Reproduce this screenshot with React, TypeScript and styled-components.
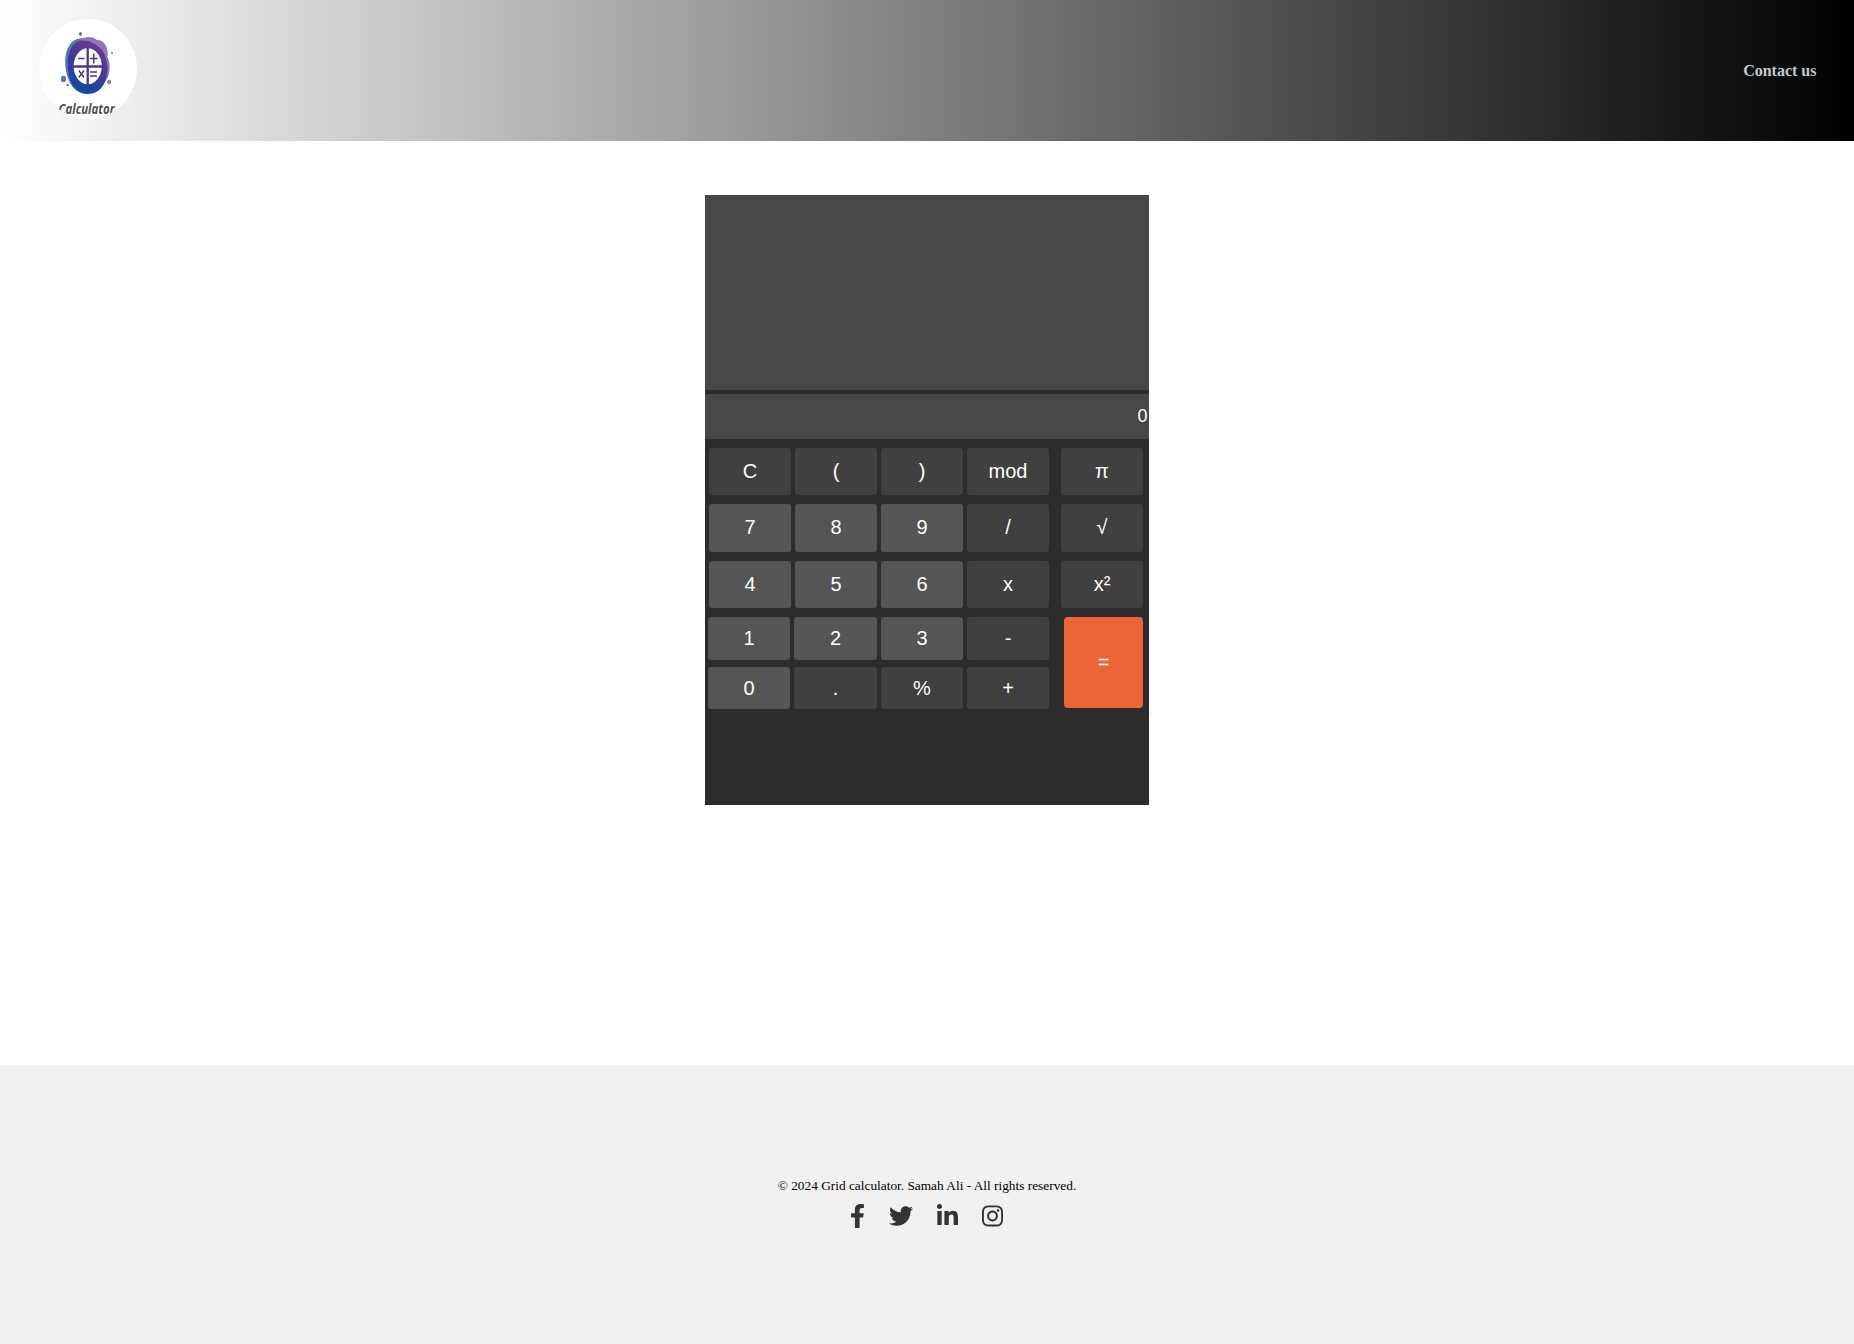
import React from "react";
import styled, { createGlobalStyle } from "styled-components";
import { FaFacebookF, FaTwitter, FaLinkedinIn, FaInstagram } from "react-icons/fa";

const GlobalStyle = createGlobalStyle`
  * { box-sizing: border-box; }
  body { margin: 0; background: #fff; font-family: "Liberation Serif", serif; }
`;

const Page = styled.div`
  display: flex;
  flex-direction: column;
  min-height: 1344px;
`;

const Header = styled.header`
  display: flex;
  align-items: center;
  justify-content: space-between;
  height: 141px;
  padding: 0 37.5px 0 38px;
  background: linear-gradient(to right, #fff, #000);
`;

const LogoSvg = styled.svg`
  display: block;
  width: 100px;
  height: 100px;
  margin-bottom: 3px;
`;

const ContactLink = styled.a`
  color: #c0c9ce;
  font-size: 16px;
  font-weight: bold;
  line-height: 18px;
  text-decoration: none;
`;

const Main = styled.main`
  display: flex;
  justify-content: center;
  align-items: flex-start;
  flex: 1;
  padding-top: 54px;
`;

const Calculator = styled.section`
  display: flex;
  flex-direction: column;
  width: 444px;
  height: 610px;
  background: #2c2c2c;
  overflow: hidden;
  font-family: "Liberation Sans", Arial, sans-serif;
`;

const History = styled.div`
  height: 195px;
  background: #474747;
`;

const Entry = styled.output`
  display: flex;
  align-items: center;
  justify-content: flex-end;
  height: 45px;
  margin: 4px -2px 0;
  padding: 0 3.5px 0 4px;
  border-radius: 5px;
  background: #474747;
  color: #fff;
  font-size: 18px;
`;

const Keypad = styled.div`
  display: grid;
  grid-template-columns: 350px 1fr;
  padding: 9px 6px 0 3px;
`;

const KeyRows = styled.div`
  display: flex;
  flex-direction: column;
`;

const KeyRow = styled.div<{ $height: number; $gap: number; $wide?: boolean }>`
  display: grid;
  grid-template-columns: ${(p) => (p.$wide ? "82px 83px 82px 82px" : "82px 82px 82px 82px")};
  column-gap: 4px;
  height: ${(p) => p.$height}px;
  margin-bottom: ${(p) => p.$gap}px;
  padding-left: ${(p) => (p.$wide ? 0 : 1)}px;
`;

const SideKeys = styled.div`
  display: grid;
  grid-template-rows: 47px 48px 47px 91px;
  row-gap: 9px;
  padding-left: 3px;
`;

const tones = { digit: "#555555", function: "#404040", equals: "#eb6536" };

const Key = styled.button<{ $tone: keyof typeof tones; $drop?: number }>`
  padding: 0 0 ${(p) => p.$drop ?? 0}px;
  border: 0;
  border-radius: ${(p) => (p.$tone === "equals" ? 4 : 3)}px;
  margin-left: ${(p) => (p.$tone === "equals" ? 3 : 0)}px;
  background: ${(p) => tones[p.$tone]};
  color: #fff;
  font-family: inherit;
  font-size: 20px;
`;

const Footer = styled.footer`
  display: flex;
  flex-direction: column;
  align-items: center;
  height: 279px;
  padding-top: 113px;
  background: #f1f1f1;
`;

const Copyright = styled.p`
  margin: 0;
  color: #000;
  font-size: 13.33px;
  line-height: 16px;
`;

const SocialLinks = styled.nav`
  display: flex;
  align-items: center;
  gap: 24px;
  margin-top: 10px;
  padding-right: 0.5px;
`;

const SocialLink = styled.a<{ $width: number }>`
  display: flex;
  justify-content: center;
  width: ${(p) => p.$width}px;
  color: #333;
  font-size: 24px;
`;

const rows = [
  { labels: ["C", "(", ")", "mod"], height: 47, gap: 9 },
  { labels: ["7", "8", "9", "/"], height: 48, gap: 9, drop: 2 },
  { labels: ["4", "5", "6", "x"], height: 47, gap: 9 },
  { labels: ["1", "2", "3", "-"], height: 43, gap: 7, wide: true },
  { labels: ["0", ".", "%", "+"], height: 42, gap: 0, wide: true },
];

const isDigit = (label: string) => /^\d$/.test(label);

function Logo() {
  return (
    <LogoSvg viewBox="0 0 100 100" role="img" aria-label="Calculator">
      <defs>
        <linearGradient id="ring" x1="0.75" y1="0.1" x2="0.3" y2="1">
          <stop offset="0" stopColor="#653b96" />
          <stop offset="0.5" stopColor="#433895" />
          <stop offset="1" stopColor="#124aa3" />
        </linearGradient>
        <clipPath id="disc"><ellipse cx="50" cy="50" rx="49" ry="50" /></clipPath>
      </defs>
      <ellipse cx="50" cy="50" rx="49" ry="50" fill="#fff" />
      <path d="M37 21C45 17 60 20 66 31C72 43 70 63 63 69C55 78 41 77 34 67C25 54 24 28 37 21Z" fill="#5276b9" />
      <path d="M42 21C47 17 55 17 59 21C66 20 71 29 69.5 38C73 45 72 55 69 60C63 70 46 75 38 66C26 54 30 28 42 21Z" fill="#9278b6" />
      <path d="M41 22C49 20 61 25 66 34C72 47 70 60 63 69C56 77 41 77 34 65C27 51 28 27 41 22Z" fill="url(#ring)" />
      <path d="M32 61C39 68 59 70 68 60C64 71 56 75 49 74.5C40 74 35 68 32 61Z" fill="#124aa3" fillOpacity="0.7" />
      <ellipse cx="49.7" cy="47.3" rx="14" ry="18" fill="#fff" />
      <path d="M49.7 29V66M34 47.5H66" stroke="#4c3794" strokeWidth="2.3" />
      <path d="M40 39.5H46.5M52 39.5H59.5M55.8 34.5V44.5M52 53H59M52 57H59M40.8 51.5L46 58.5M46 51.5L40.8 58.5" stroke="#493592" strokeWidth="1.4" fill="none" />
      <ellipse cx="42.5" cy="15" rx="1.6" ry="2" fill="#6f78b9" />
      <ellipse cx="25.5" cy="60" rx="2.6" ry="3.2" fill="#5377b8" />
      <circle cx="29.5" cy="66" r="1.2" fill="#5377b8" />
      <ellipse cx="71.2" cy="63" rx="2" ry="2.2" fill="#9276b6" />
      <circle cx="74" cy="34" r="1" fill="#776cae" />
      <text x="20.5" y="94.5" clipPath="url(#disc)" fill="#505052" fontFamily="Open Sans, sans-serif" fontSize="14.5" fontStyle="italic" fontWeight="700" textLength="56" lengthAdjust="spacingAndGlyphs">Calculator</text>
    </LogoSvg>
  );
}

export default function App() {
  return (
    <Page>
      <GlobalStyle />
      <Header>
        <Logo />
        <ContactLink>Contact us</ContactLink>
      </Header>
      <Main>
        <Calculator>
          <History />
          <Entry>0</Entry>
          <Keypad>
            <KeyRows>
              {rows.map((row) => (
                <KeyRow key={row.labels[0]} $height={row.height} $gap={row.gap} $wide={row.wide}>
                  {row.labels.map((label) => (
                    <Key key={label} $tone={isDigit(label) ? "digit" : "function"} $drop={row.drop}>{label}</Key>
                  ))}
                </KeyRow>
              ))}
            </KeyRows>
            <SideKeys>
              <Key $tone="function">π</Key>
              <Key $tone="function" $drop={2}>√</Key>
              <Key $tone="function">x²</Key>
              <Key $tone="equals">=</Key>
            </SideKeys>
          </Keypad>
        </Calculator>
      </Main>
      <Footer>
        <Copyright>© 2024 Grid calculator. Samah Ali - All rights reserved.</Copyright>
        <SocialLinks>
          <SocialLink $width={15} aria-label="Facebook"><FaFacebookF /></SocialLink>
          <SocialLink $width={24} aria-label="Twitter"><FaTwitter /></SocialLink>
          <SocialLink $width={21} aria-label="LinkedIn"><FaLinkedinIn /></SocialLink>
          <SocialLink $width={21} aria-label="Instagram"><FaInstagram /></SocialLink>
        </SocialLinks>
      </Footer>
    </Page>
  );
}
